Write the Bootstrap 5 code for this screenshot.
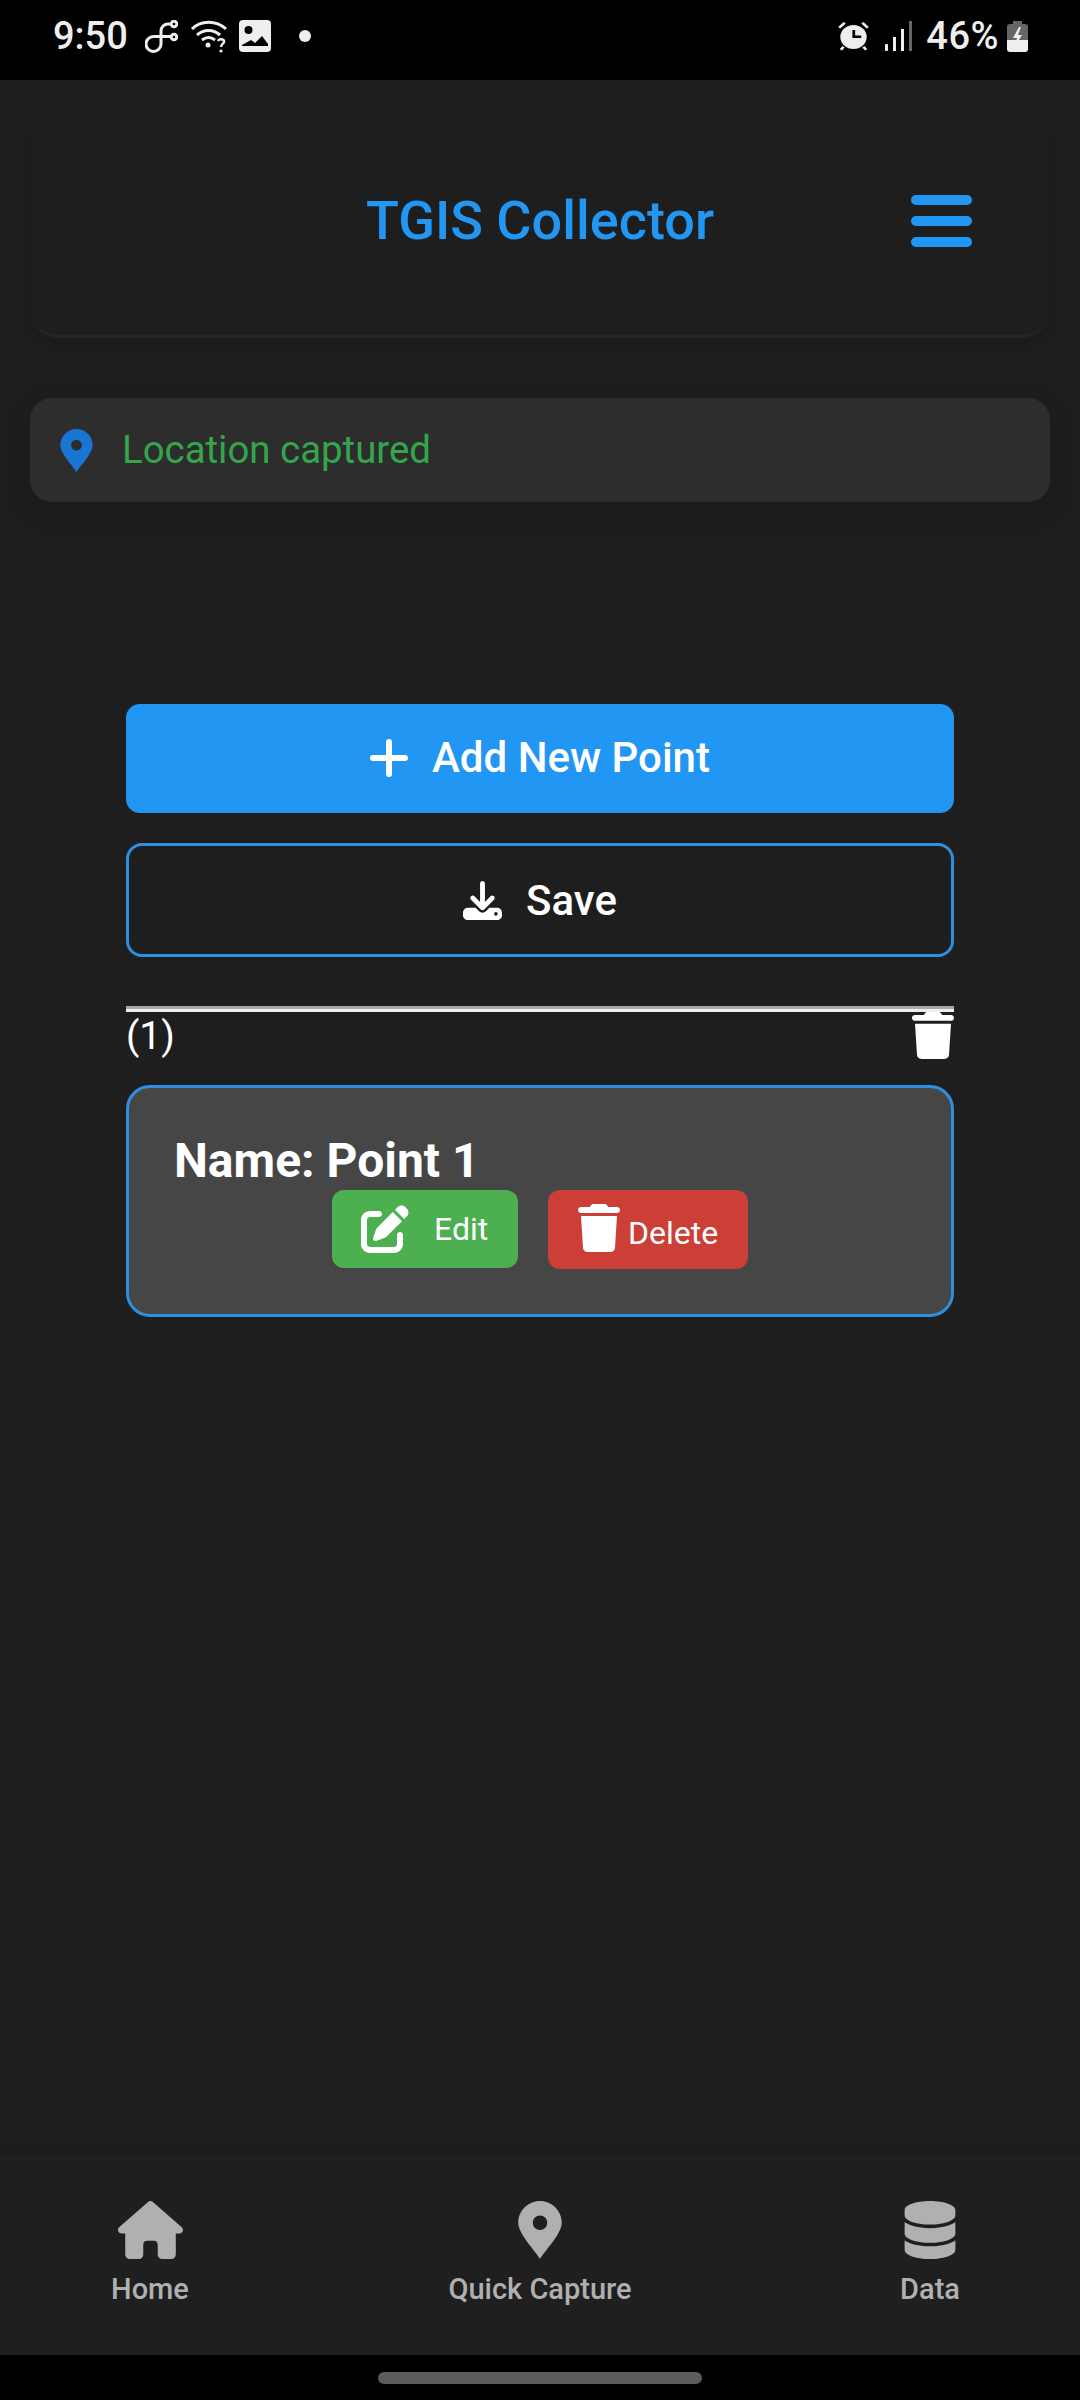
<!DOCTYPE html>
<html lang="en">
<head>
    <meta charset="UTF-8">
    <meta name="viewport" content="width=device-width, initial-scale=1.0">
    <link href="https://cdn.jsdelivr.net/npm/bootstrap@5.3.0/dist/css/bootstrap.min.css" rel="stylesheet">
    <title>TGIS Collector</title>
    <style>
        html, body { height: 2400px; }
        body { width: 1080px; background: #000; font-family: Roboto, "Liberation Sans", sans-serif; overflow: hidden; }
        svg { fill: currentColor; display: block; flex: none; }
        .status-bar { height: 80px; padding: 0 52px 8px 53px; color: #eee; font-size: 38px; font-weight: 500; }
        .status-bar .pct { letter-spacing: .5px; margin-left: 13px; }
        .ic-link { margin-left: 17px; fill: none; stroke: currentColor; stroke-width: 3; }
        .ic-wifi { margin-left: 12px; fill: none; stroke: currentColor; stroke-width: 3; }
        .ic-image { margin-left: 11px; }
        .ic-dot { margin-left: 28px; }
        .ic-signal { margin-left: 15px; }
        .ic-batt { margin-left: 8px; }
        .app-main { background: #1e1e1e; overflow: hidden; padding: 45px 30px 0; }
        .head-panel { height: 213px; padding: 0 78px 19px; background: #1e1e1e; border-radius: 0 0 28px 28px; border-bottom: 3px solid #252525; box-shadow: 0 6px 12px rgba(0,0,0,.08); display: grid; grid-template-columns: 1fr auto 1fr; align-items: center; }
        .app-title { margin: 0; font-size: 54px; font-weight: 500; color: #2196f3; line-height: 1; }
        .burger { justify-self: end; width: 61px; }
        .burger span { display: block; height: 10px; border-radius: 5px; background: #2196f3; margin-bottom: 11px; }
        .burger span:last-child { margin-bottom: 0; }
        .loc-bar { margin-top: 60px; height: 104px; padding-left: 30px; gap: 29px; background: #2d2d2d; border-radius: 22px; box-shadow: 0 8px 30px rgba(0,0,0,.14); color: #34a64a; font-size: 38.4px; }
        .loc-bar svg { color: #1976d2; }
        .panel-wrap { margin: 93px 49px 0; padding: 109px 47px 0; flex: 1; border-radius: 36px 36px 0 0; box-shadow: 0 0 6px rgba(0,0,0,.06); }
        .btn-add, .btn-save { width: 100%; display: flex; align-items: center; justify-content: center; color: #fff; font-size: 42px; font-weight: 500; border-radius: 14px; padding: 0; }
        .btn-add { height: 109px; gap: 24px; background: #2196f3; border: 0; padding-bottom: 2px; }
        .btn-save { height: 114px; gap: 24px; margin-top: 30px; background: transparent; border: 3px solid #2e8fe0; border-radius: 16px; }
        .btn-add:hover { background: #2196f3; color: #fff; }
        .btn-save:hover { color: #fff; }
        .rule { margin-top: 49px; height: 6px; border-top: 3px solid #a9a9a9; border-bottom: 3px solid #eee; }
        .count-row { height: 73px; color: #fff; font-size: 39px; line-height: 48px; }
        .point-box { height: 232px; background: #464646; border: 3px solid #2e8fe0; border-radius: 24px; padding: 46px 45px 0; color: #fff; }
        .point-name { margin: 0; font-size: 48px; font-weight: 700; line-height: 54px; }
        .act-row { gap: 30px; margin-top: 2px; }
        .btn-edit, .btn-del { display: flex; color: #fff; font-size: 32px; padding: 0; border: 0; border-radius: 12px; height: 78px; }
        .btn-edit { width: 186px; background: #4caf50; align-items: center; padding-left: 29px; gap: 25px; }
        .btn-del { width: 200px; height: 79px; background: #cb3f37; padding: 14px 0 0 30px; gap: 8px; }
        .btn-del span { line-height: 1; margin-top: 13px; }
        .btn-edit:hover { background: #4caf50; color: #fff; }
        .btn-del:hover { background: #cb3f37; color: #fff; }
        .bottom-nav { height: 200px; background: #1f1f1f; padding-top: 46px; color: #b0b0b0; font-size: 29px; font-weight: 500; position: relative; box-shadow: 0 -3px 8px rgba(0,0,0,.08); }
        .nav-cell { width: 300px; height: 104px; color: inherit; text-decoration: none; }
        .nav-cell svg { height: 58px; }
        .nav-cell span { line-height: 34px; margin-top: 13px; }
        .gesture { height: 45px; padding-top: 17px; }
        .gesture div { width: 324px; height: 12px; border-radius: 6px; background: #5c5c5c; }
    </style>
</head>
<body class="d-flex flex-column">
    <!-- phone status bar -->
    <div class="status-bar d-flex align-items-center justify-content-between flex-shrink-0">
        <div class="d-flex align-items-center">
            <span>9:50</span>
            <svg class="ic-link" width="33" height="33" viewBox="0 0 33 33"><path d="M26 4h-3a7 7 0 0 0-7 7v13a7.500 7.500 0 1 1-7.500-7.500H26"/><circle cx="29" cy="4" r="2.800"/><circle cx="29" cy="17" r="2.800"/></svg>
            <svg class="ic-wifi" width="38" height="34" viewBox="0 0 38 34"><path d="M2 10C11 1 26 1 36 10"/><path d="M7 16C14 10 23 10 30 16"/><path d="M12 21C16 18 21 18 25 21"/><circle cx="18" cy="26" r="2.500" fill="currentColor" stroke="none"/><path d="M28 22c1-3 7-2 6 1-.5 2-3 2-3 5" stroke-width="2.500"/><circle cx="31" cy="32" r="1.600" fill="currentColor" stroke="none"/></svg>
            <svg class="ic-image" width="32" height="32" viewBox="0 0 32 32"><path fill-rule="evenodd" d="M4 0h24a4 4 0 0 1 4 4v24a4 4 0 0 1-4 4H4a4 4 0 0 1-4-4V4a4 4 0 0 1 4-4zM9.500 6a4 4 0 1 0 0 8 4 4 0 0 0 0-8zM3 25v1h26v-2l-6-8-7 7-4-3z"/></svg>
            <svg class="ic-dot" width="12" height="12" viewBox="0 0 12 12"><circle cx="6" cy="6" r="6"/></svg>
        </div>
        <div class="d-flex align-items-center">
            <svg width="33" height="30" viewBox="0 0 30 30" preserveAspectRatio="none"><path fill-rule="evenodd" d="M15 4a12 12 0 1 1 0 24 12 12 0 0 1 0-24zM14 9v8h8v-2.500h-5.500V9z"/><path d="M1 6l5-5 2 1.500-5 5zM29 6l-5-5-2 1.500 5 5zM5 25l2 1.500-2.500 3-2-1.500zM25 25l-2 1.500 2.500 3 2-1.500z"/></svg>
            <svg class="ic-signal" width="28" height="30" viewBox="0 0 28 30"><rect x="0" y="23" width="3" height="7" rx="1"/><rect x="8" y="16" width="3" height="14"/><rect x="16" y="8" width="3" height="22"/><rect x="24" y="0" width="3" height="30" fill="#666"/></svg>
            <span class="pct">46%</span>
            <svg class="ic-batt" width="21" height="31" viewBox="0 0 21 31"><path fill="#666" d="M6 0h9v3h3a3 3 0 0 1 3 3v13H0V6a3 3 0 0 1 3-3h3z"/><path d="M0 19h21v9a3 3 0 0 1-3 3H3a3 3 0 0 1-3-3z"/><path d="M12 6l-6 11h4l-2 8 7-11h-4l3-8z" fill="#eee"/></svg>
        </div>
    </div>

    <div class="app-main flex-grow-1 d-flex flex-column">
        <div class="head-panel">
            <div></div>
            <h1 class="app-title">TGIS Collector</h1>
            <div class="burger"><span></span><span></span><span></span></div>
        </div>

        <div class="loc-bar d-flex align-items-center flex-shrink-0">
            <svg width="33" height="43" viewBox="0 0 384 512"><path fill-rule="evenodd" d="M192 512C150 440 0 290 0 192 0 86 86 0 192 0s192 86 192 192c0 98-150 248-192 320zM192 128a64 64 0 1 0 0 128 64 64 0 0 0 0-128z"/></svg>
            <span>Location captured</span>
        </div>

        <div class="panel-wrap">
            <button class="btn btn-add">
                <svg width="38" height="38" viewBox="0 0 38 38"><rect x="16" y="0" width="6" height="38" rx="3"/><rect x="0" y="16" width="38" height="6" rx="3"/></svg>
                <span>Add New Point</span>
            </button>
            <button class="btn btn-save">
                <svg width="39" height="39" viewBox="0 0 512 512"><path fill-rule="evenodd" d="M288 32c0-17.700-14.300-32-32-32s-32 14.300-32 32V274.700l-73.400-73.400c-12.500-12.500-32.800-12.500-45.300 0s-12.500 32.800 0 45.300l128 128c12.500 12.500 32.800 12.500 45.300 0l128-128c12.500-12.500 12.500-32.800 0-45.300s-32.800-12.500-45.300 0L288 274.700V32zM64 352c-35.300 0-64 28.700-64 64v32c0 35.300 28.700 64 64 64H448c35.300 0 64-28.700 64-64V416c0-35.300-28.700-64-64-64H346.500l-45.300 45.300c-25 25-65.500 25-90.500 0L165.500 352H64zm368 56a24 24 0 1 1 0 48 24 24 0 1 1 0-48z"/></svg>
                <span>Save</span>
            </button>

            <div class="rule"></div>
            <div class="count-row d-flex justify-content-between align-items-start">
                <span>(1)</span>
                <svg width="42" height="47" viewBox="0 0 448 512" preserveAspectRatio="none"><path d="M135.200 17.700L128 32H32C14.300 32 0 46.300 0 64S14.300 96 32 96H416c17.700 0 32-14.300 32-32s-14.300-32-32-32H320l-7.200-14.300C307.400 6.800 296.300 0 284.200 0H163.800c-12.100 0-23.200 6.800-28.600 17.700zM416 128H32L53.200 467c1.600 25.300 22.600 45 47.900 45H346.900c25.300 0 46.300-19.700 47.900-45L416 128z"/></svg>
            </div>

            <div class="point-box">
                <h2 class="point-name">Name: Point 1</h2>
                <div class="act-row d-flex justify-content-center">
                    <button class="btn btn-edit">
                        <svg width="48" height="48" viewBox="0 0 512 512"><path d="M471.600 21.700c-21.900-21.900-57.300-21.900-79.200 0L362.300 51.700l97.900 97.900 30.100-30.100c21.900-21.900 21.900-57.300 0-79.200L471.600 21.700zm-299.200 220c-6.100 6.100-10.800 13.600-13.500 21.900l-29.600 88.800c-2.900 8.600-.6 18.100 5.800 24.600s15.900 8.700 24.600 5.800l88.800-29.600c8.200-2.700 15.700-7.400 21.900-13.500L437.700 172.300 339.700 74.300 172.400 241.700zM96 64C43 64 0 107 0 160V416c0 53 43 96 96 96H352c53 0 96-43 96-96V320c0-17.700-14.300-32-32-32s-32 14.300-32 32v96c0 17.700-14.300 32-32 32H96c-17.700 0-32-14.300-32-32V160c0-17.700 14.300-32 32-32h96c17.700 0 32-14.300 32-32s-14.300-32-32-32H96z"/></svg>
                        <span>Edit</span>
                    </button>
                    <button class="btn btn-del">
                        <svg width="42" height="48" viewBox="0 0 448 512" preserveAspectRatio="none"><path d="M135.200 17.700L128 32H32C14.300 32 0 46.300 0 64S14.300 96 32 96H416c17.700 0 32-14.300 32-32s-14.300-32-32-32H320l-7.200-14.300C307.400 6.800 296.300 0 284.200 0H163.800c-12.100 0-23.200 6.800-28.600 17.700zM416 128H32L53.200 467c1.600 25.300 22.600 45 47.900 45H346.900c25.300 0 46.300-19.700 47.900-45L416 128z"/></svg>
                        <span>Delete</span>
                    </button>
                </div>
            </div>
        </div>
    </div>

    <nav class="bottom-nav d-flex justify-content-between flex-shrink-0">
        <a class="nav-cell d-flex flex-column align-items-center" href="#">
            <svg width="65" height="58" viewBox="0 0 576 512"><path d="M575.800 255.500c0 18-15 32.100-32 32.100h-32l.7 160.200c0 2.700-.2 5.400-.5 8.100V472c0 22.100-17.900 40-40 40H456c-1.100 0-2.200 0-3.300-.1c-1.400 .1-2.800 .1-4.200 .1H416 392c-22.100 0-40-17.900-40-40V448 384c0-17.700-14.300-32-32-32H256c-17.700 0-32 14.300-32 32v64 24c0 22.100-17.900 40-40 40H160 128.100c-1.500 0-3-.1-4.500-.2c-1.200 .1-2.400 .2-3.600 .2H104c-22.100 0-40-17.900-40-40V360c0-.9 0-1.900 .1-2.800V287.600H32c-18 0-32-14-32-32.100c0-9 3-17 10-24L266.400 8c7-7 15-8 22-8s15 2 21 7L564.800 231.500c8 7 12 15 11 24z"/></svg>
            <span>Home</span>
        </a>
        <a class="nav-cell d-flex flex-column align-items-center" href="#">
            <svg width="44" height="58" viewBox="0 0 384 512"><path fill-rule="evenodd" d="M192 512C150 440 0 290 0 192 0 86 86 0 192 0s192 86 192 192c0 98-150 248-192 320zM192 128a64 64 0 1 0 0 128 64 64 0 0 0 0-128z"/></svg>
            <span>Quick Capture</span>
        </a>
        <a class="nav-cell d-flex flex-column align-items-center" href="#">
            <svg width="52" height="60" viewBox="0 0 448 512"><path d="M448 80v48c0 44.200-100.300 80-224 80S0 172.200 0 128V80C0 35.800 100.300 0 224 0S448 35.800 448 80zM393.200 214.700c20.800-7.400 39.900-16.900 54.800-28.600V288c0 44.200-100.300 80-224 80S0 332.200 0 288V186.100c14.900 11.800 34 21.200 54.800 28.600C99.700 230.700 159.500 240 224 240s124.300-9.300 169.200-25.300zM0 346.100c14.900 11.800 34 21.200 54.800 28.600C99.700 390.700 159.500 400 224 400s124.300-9.300 169.200-25.300c20.800-7.400 39.900-16.900 54.800-28.600V432c0 44.200-100.300 80-224 80S0 476.200 0 432V346.100z"/></svg>
            <span>Data</span>
        </a>
    </nav>

    <div class="gesture d-flex justify-content-center flex-shrink-0"><div></div></div>

    <script src="https://cdn.jsdelivr.net/npm/bootstrap@5.3.0/dist/js/bootstrap.bundle.min.js"></script>
</body>
</html>
